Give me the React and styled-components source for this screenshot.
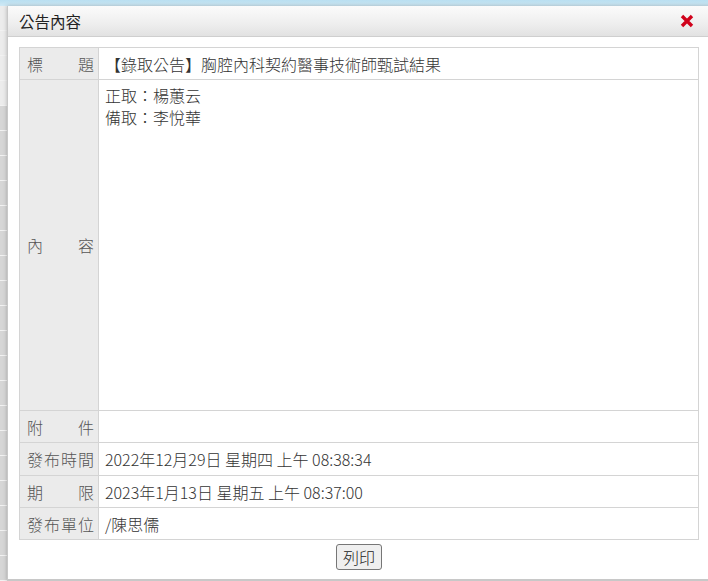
import React from 'react'
import styled, { createGlobalStyle } from 'styled-components'

const GlobalStyle = createGlobalStyle`
  html, body { margin: 0; padding: 0; }
  body {
    width: 708px;
    height: 581px;
    overflow: hidden;
    font-family: "Noto Sans CJK TC", "Noto Sans", sans-serif;
    background: linear-gradient(180deg, #b9dff1 0px, #cfe9f5 6px, #d9d9d9 6px);
  }
`

const Page = styled.div`
  position: relative;
  width: 708px;
  height: 581px;
  overflow: hidden;
`

// the faded page behind the dialog, only its left edge shows
const SideList = styled.div`
  position: absolute;
  left: 0;
  top: 6px;
  width: 7px;
  height: 575px;
  display: flex;
  flex-direction: column;
  background: #e4e4e4;
`

const SideRow = styled.div`
  height: 25px;
  border-bottom: 1px solid #f2f2f2;
  background: ${p => (p.$light ? '#ececec' : '#d6d6d6')};
`

const Dialog = styled.div`
  position: absolute;
  left: 7px;
  top: 6px;
  width: 712px;
  height: 573px;
  background: #fff;
  border-left: 1px solid #c8c8c8;
  border-bottom: 2px solid #c8c8c8;
  box-shadow: 0 0 4px rgba(0, 0, 0, 0.25);
  display: flex;
  flex-direction: column;
`

const Header = styled.div`
  height: 30px;
  display: flex;
  align-items: center;
  justify-content: space-between;
  padding: 0 26px 0 11px;
  background: linear-gradient(180deg, #fbfbfb 0%, #eeeeee 60%, #e2e2e2 100%);
  border-bottom: 1px solid #cfcfcf;
`

const Title = styled.div`
  font-size: 15.5px;
  color: #222;
`

const Close = styled.button`
  border: none;
  background: none;
  padding: 0;
  width: 14px;
  height: 14px;
  display: flex;
  cursor: pointer;
`

const Body = styled.div`
  width: 680px;
  padding: 10px 11px 0 11px;
  display: flex;
  flex-direction: column;
`

const Table = styled.table`
  width: 680px;
  border-collapse: collapse;
  font-size: 16px;
  font-weight: 300;
`

const Label = styled.th`
  width: 79px;
  box-sizing: border-box;
  background: #ebebeb;
  border: 1px solid #d4d4d4;
  color: #555;
  font-weight: 300;
  padding: 0 4px 0 7px;
  text-align: justify;
  text-align-last: justify;
  height: ${p => p.$h || 32}px;
`

const Value = styled.td`
  border: 1px solid #d4d4d4;
  color: #333;
  padding: ${p => (p.$top ? '4px 6px' : '0 6px')};
  vertical-align: ${p => (p.$top ? 'top' : 'middle')};
  line-height: 22px;
`

const Footer = styled.div`
  display: flex;
  justify-content: center;
  padding-top: 4px;
`

const PrintButton = styled.button`
  font-family: "Noto Sans CJK TC", sans-serif;
  font-size: 16px;
  font-weight: 300;
  color: #222;
  height: 26px;
  padding: 0 6px;
  border: 1px solid #767676;
  border-radius: 3px;
  background: #efefef;
  line-height: 22px;
`

const rows = [
  { label: '標題', value: '【錄取公告】胸腔內科契約醫事技術師甄試結果' },
  { label: '內容', value: ['正取：楊蕙云', '備取：李悅華'], h: 331, top: true },
  { label: '附件', value: '' },
  { label: '發布時間', value: '2022年12月29日 星期四 上午 08:38:34', h: 33 },
  { label: '期限', value: '2023年1月13日 星期五 上午 08:37:00' },
  { label: '發布單位', value: '/陳思儒' },
]

export default function App() {
  return (
    <Page>
      <GlobalStyle />
      <SideList>
        {Array.from({ length: 23 }).map((_, i) => (
          <SideRow key={i} $light={i < 4} />
        ))}
      </SideList>
      <Dialog>
        <Header>
          <Title>公告內容</Title>
          <Close aria-label="close">
            <svg width="14" height="14" viewBox="0 0 14 14">
              <path d="M2 2 L12 12 M12 2 L2 12" stroke="#d0021b" strokeWidth="3.4" strokeLinecap="butt" />
            </svg>
          </Close>
        </Header>
        <Body>
          <Table>
            <tbody>
              {rows.map(r => (
                <tr key={r.label}>
                  <Label $h={r.h}>{r.label}</Label>
                  <Value $top={r.top}>
                    {Array.isArray(r.value)
                      ? r.value.map(v => <div key={v}>{v}</div>)
                      : r.value}
                  </Value>
                </tr>
              ))}
            </tbody>
          </Table>
          <Footer>
            <PrintButton>列印</PrintButton>
          </Footer>
        </Body>
      </Dialog>
    </Page>
  )
}
